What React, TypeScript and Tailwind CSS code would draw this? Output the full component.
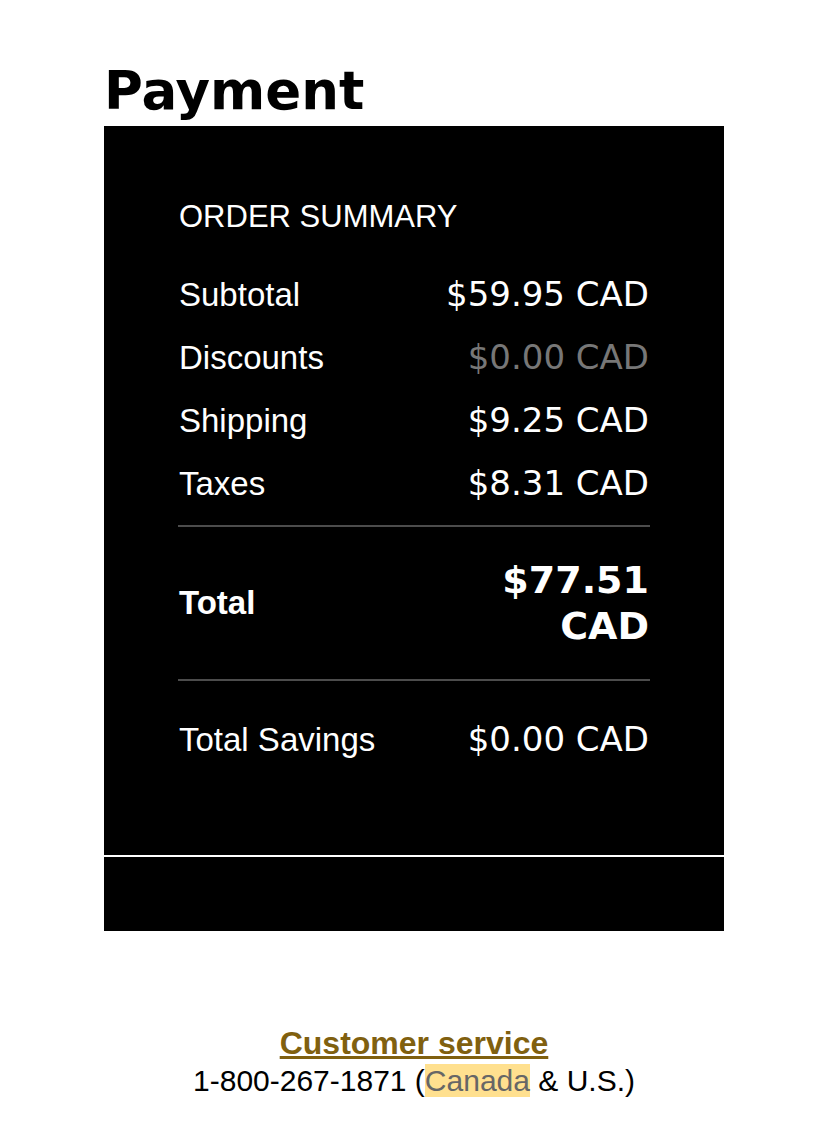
interface SummaryRow {
  label: string;
  value: string;
  muted?: boolean;
}

const rows: SummaryRow[] = [
  { label: "Subtotal", value: "$59.95 CAD" },
  { label: "Discounts", value: "$0.00 CAD", muted: true },
  { label: "Shipping", value: "$9.25 CAD" },
  { label: "Taxes", value: "$8.31 CAD" },
];

export default function PaymentPage() {
  return (
    <main className="bg-white font-['Liberation_Sans',sans-serif] text-black">
      <div className="mx-auto max-w-[620px] pt-14">
        <h1 className="font-['DejaVu_Sans',sans-serif] text-[53px] leading-[70px] font-bold">
          Payment
        </h1>

        <section className="bg-black text-white">
          <div className="border-b-2 border-white px-[74px] pt-[71px] pb-[84px]">
            <h2 className="px-px text-[31px] leading-10">ORDER SUMMARY</h2>

            <table className="mt-[26px] w-full border-collapse">
              <tbody>
                {rows.map((row) => (
                  <Row key={row.label} {...row} />
                ))}
                <tr aria-hidden="true" className="h-[11px]" />
              </tbody>
              <tbody className="border-y-2 border-[#4c4c4c]">
                <tr className="h-[154px] font-bold">
                  <th scope="row" className="px-px text-left text-[33px]">
                    Total
                  </th>
                  <td className="px-px text-right font-['DejaVu_Sans',sans-serif] text-[38px] leading-[46px]">
                    $77.51
                    <br />
                    CAD
                  </td>
                </tr>
              </tbody>
              <tbody>
                <tr aria-hidden="true" className="h-7" />
                <Row label="Total Savings" value="$0.00 CAD" />
              </tbody>
            </table>
          </div>
          <div className="h-[74px]" />
        </section>
      </div>

      <footer className="pt-[93px] pb-6 text-center">
        <p className="text-[32px] leading-[38px] font-bold">
          <a href="#customer-service" className="text-[#80600f] underline">
            Customer service
          </a>
        </p>
        <p className="text-[30px] leading-[38px]">
          1-800-267-1871 (
          <mark className="bg-[#ffe08f] text-[#666666]">Canada</mark> &amp; U.S.)
        </p>
      </footer>
    </main>
  );
}

function Row({ label, value, muted }: SummaryRow) {
  return (
    <tr className="h-[63px]">
      <th scope="row" className="px-px text-left text-[33px] font-normal">
        {label}
      </th>
      <td
        className={`px-px text-right font-['DejaVu_Sans',sans-serif] text-[34px] ${
          muted ? "text-[#777777]" : ""
        }`}
      >
        {value}
      </td>
    </tr>
  );
}
